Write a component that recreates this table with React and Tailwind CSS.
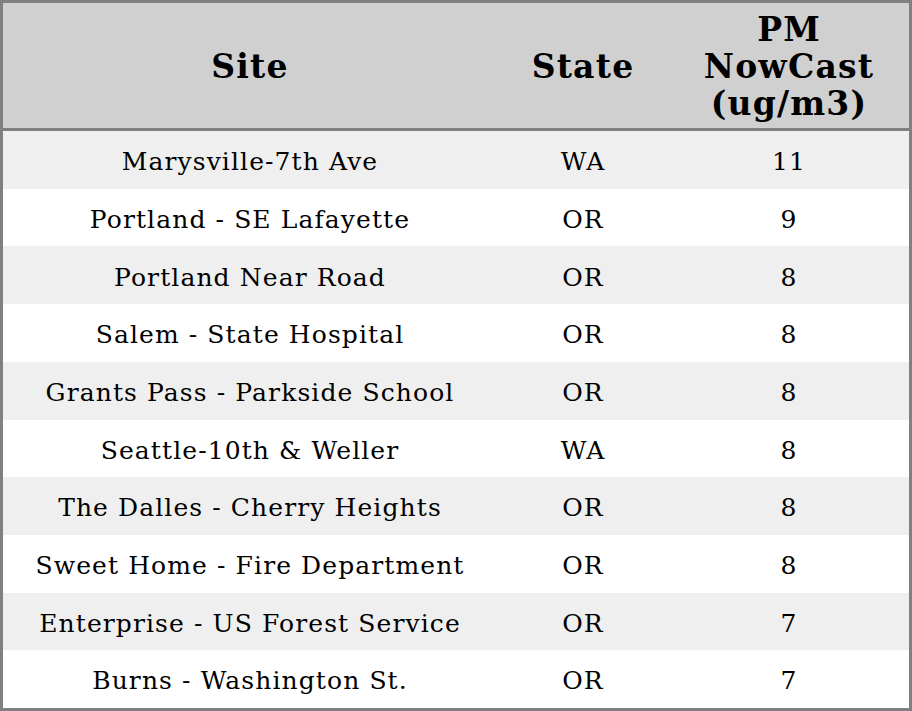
const rows = [
  ['Marysville-7th Ave', 'WA', '11'],
  ['Portland - SE Lafayette', 'OR', '9'],
  ['Portland Near Road', 'OR', '8'],
  ['Salem - State Hospital', 'OR', '8'],
  ['Grants Pass - Parkside School', 'OR', '8'],
  ['Seattle-10th & Weller', 'WA', '8'],
  ['The Dalles - Cherry Heights', 'OR', '8'],
  ['Sweet Home - Fire Department', 'OR', '8'],
  ['Enterprise - US Forest Service', 'OR', '7'],
  ['Burns - Washington St.', 'OR', '7'],
];

export default function App() {
  return (
    <div className="w-[912px] h-[711px] bg-white font-['DejaVu_Serif',serif] text-black">
      <div className="flex h-full flex-col border-[3px] border-[#808080]">
        <div className="grid h-[128px] shrink-0 grid-cols-[494px_172px_1fr] items-center border-b-[3px] border-[#808080] bg-[#d0d0d0] pt-[2px] text-center text-[33px] font-bold leading-[37px] tracking-[1.2px]">
          <div>Site</div>
          <div>State</div>
          <div>PM<br />NowCast<br />(ug/m3)</div>
        </div>
        <div className="flex flex-1 flex-col">
          {rows.map((r, i) => (
            <div
              key={i}
              className={`grid flex-1 grid-cols-[494px_172px_1fr] items-center pt-[4px] text-center text-[25px] tracking-[1.1px] ${i % 2 === 0 ? 'bg-[#efefef]' : 'bg-white'}`}
            >
              <div>{r[0]}</div>
              <div>{r[1]}</div>
              <div>{r[2]}</div>
            </div>
          ))}
        </div>
      </div>
    </div>
  );
}
